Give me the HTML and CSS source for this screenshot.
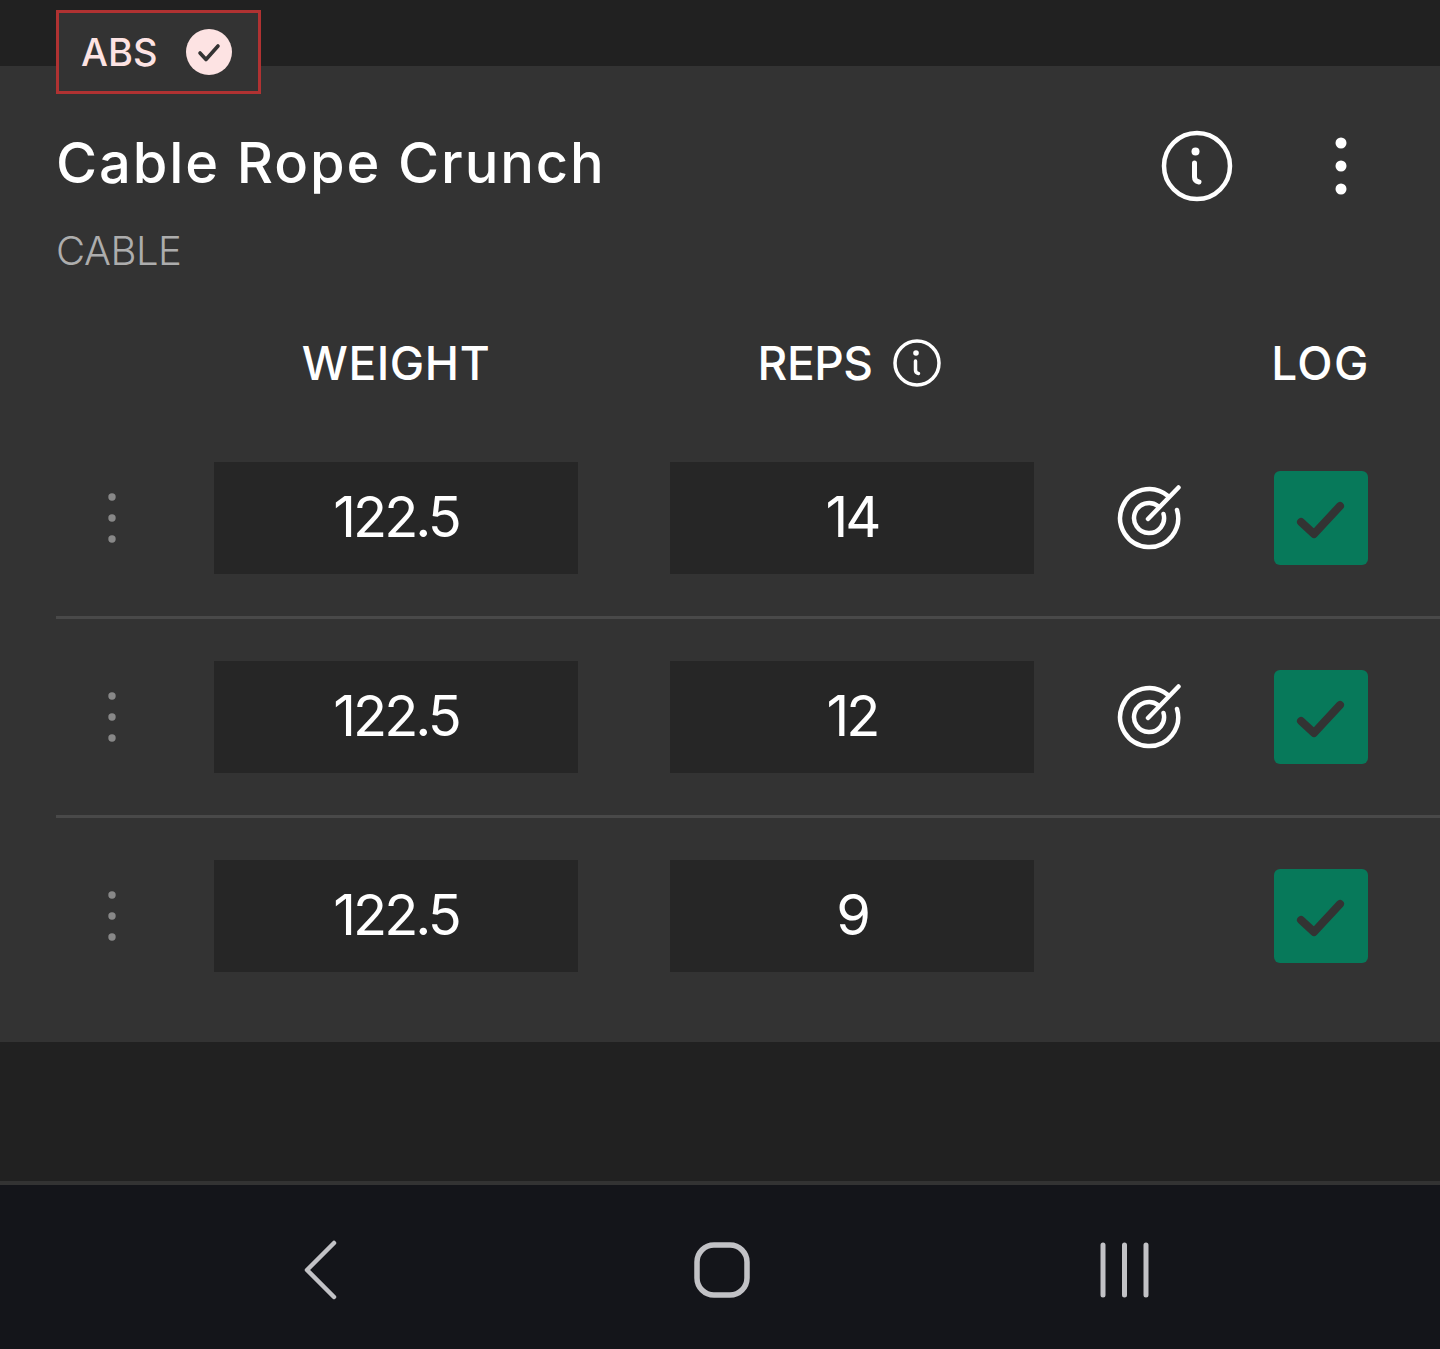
FILE: index.html
```html
<!DOCTYPE html>
<html lang="en">
<head>
  <meta charset="UTF-8">
  <title>Cable Rope Crunch</title>
  <meta name="viewport" content="width=device-width, initial-scale=1.0">
  <link rel="stylesheet" href="styles.css">
</head>
<body>
  <div class="top-bar">
    <div class="muscle-chip">
      <span>ABS</span>
      <svg class="chip-check" viewBox="0 0 46 46"><circle cx="23" cy="23" r="23" fill="#fde3e3"/><path d="M14 24l6 6.500 12-13.500" fill="none" stroke="#333" stroke-width="3.600" stroke-linecap="round" stroke-linejoin="round"/></svg>
    </div>
  </div>

  <section class="card">
    <div class="title-row">
      <h1>Cable Rope Crunch</h1>
      <svg class="info-big" viewBox="0 0 72 72"><circle cx="36" cy="36" r="33" fill="none" stroke="#fff" stroke-width="4.500"/><circle cx="34.500" cy="21.500" r="4" fill="#fff"/><path d="M33.500 33v14q0 4 4.500 5" fill="none" stroke="#fff" stroke-width="5" stroke-linecap="round"/></svg>
      <svg class="kebab" viewBox="0 0 12 58"><circle cx="6" cy="6" r="5.500" fill="#fff"/><circle cx="6" cy="29" r="5.500" fill="#fff"/><circle cx="6" cy="52" r="5.500" fill="#fff"/></svg>
    </div>
    <div class="equipment">CABLE</div>

    <div class="set-grid set-head">
      <div></div>
      <div class="col-title weight-title">WEIGHT</div>
      <div class="col-title reps-title">REPS
        <svg class="info-small" viewBox="0 0 48 48"><circle cx="24" cy="24" r="22" fill="none" stroke="#fff" stroke-width="3.500"/><circle cx="23" cy="14" r="2.800" fill="#fff"/><path d="M22.500 22v9q0 3 3 3.500" fill="none" stroke="#fff" stroke-width="3.500" stroke-linecap="round"/></svg>
      </div>
      <div></div>
      <div class="col-title log-title">LOG</div>
    </div>

    <div class="set-grid set-row">
      <svg class="handle" viewBox="0 0 8 50"><circle cx="4" cy="4" r="3.700"/><circle cx="4" cy="25" r="3.700"/><circle cx="4" cy="46" r="3.700"/></svg>
      <div class="value">122.5</div>
      <div class="value">14</div>
      <svg class="target" viewBox="0 0 68 68"><path d="M52 12A29 29 0 1 0 61 26M42 22A15 15 0 1 0 47.500 30M32 35L62.500 3.500" fill="none" stroke="#fff" stroke-width="4.500" stroke-linecap="round"/></svg>
      <div class="log-btn"><svg viewBox="0 0 94 94"><path d="M27 51L40 63 66 35" fill="none" stroke="#333" stroke-width="8" stroke-linecap="round" stroke-linejoin="round"/></svg></div>
    </div>

    <div class="set-grid set-row">
      <svg class="handle" viewBox="0 0 8 50"><circle cx="4" cy="4" r="3.700"/><circle cx="4" cy="25" r="3.700"/><circle cx="4" cy="46" r="3.700"/></svg>
      <div class="value">122.5</div>
      <div class="value">12</div>
      <svg class="target" viewBox="0 0 68 68"><path d="M52 12A29 29 0 1 0 61 26M42 22A15 15 0 1 0 47.500 30M32 35L62.500 3.500" fill="none" stroke="#fff" stroke-width="4.500" stroke-linecap="round"/></svg>
      <div class="log-btn"><svg viewBox="0 0 94 94"><path d="M27 51L40 63 66 35" fill="none" stroke="#333" stroke-width="8" stroke-linecap="round" stroke-linejoin="round"/></svg></div>
    </div>

    <div class="set-grid set-row last">
      <svg class="handle" viewBox="0 0 8 50"><circle cx="4" cy="4" r="3.700"/><circle cx="4" cy="25" r="3.700"/><circle cx="4" cy="46" r="3.700"/></svg>
      <div class="value">122.5</div>
      <div class="value">9</div>
      <div></div>
      <div class="log-btn"><svg viewBox="0 0 94 94"><path d="M27 51L40 63 66 35" fill="none" stroke="#333" stroke-width="8" stroke-linecap="round" stroke-linejoin="round"/></svg></div>
    </div>
  </section>

  <div class="spacer"></div>

  <nav class="nav-bar">
    <svg class="nav-back" viewBox="0 0 34 60"><path d="M31 3L4 30l0 0 27 27" fill="none" stroke="#c2c2c6" stroke-width="4.500" stroke-linecap="round" stroke-linejoin="round"/></svg>
    <svg class="nav-home" viewBox="0 0 60 60"><rect x="5" y="5" width="50" height="50" rx="17" fill="none" stroke="#c2c2c6" stroke-width="5.500"/></svg>
    <svg class="nav-recent" viewBox="0 0 56 56"><path d="M7 3v50M28.500 3v50M50 3v50" fill="none" stroke="#c2c2c6" stroke-width="5" stroke-linecap="round"/></svg>
  </nav>
</body>
</html>
```

FILE: styles.css
```css
* { box-sizing: border-box; }
body { margin: 0; font-family: Inter, "Noto Sans", sans-serif; background: #212121; color: #fff; }

.top-bar { height: 66px; padding: 10px 0 0 56px; }
.muscle-chip {
  display: flex; align-items: center; gap: 29px;
  width: 205px; height: 84px; padding-left: 22px;
  background: #333; border: 3px solid #b03232;
  position: relative; z-index: 1;
  font-size: 38px; font-weight: 500; color: #fde3e3;
}
.chip-check { width: 46px; height: 46px; }

.card { height: 976px; padding: 0 0 0 56px; background: #333; }

.title-row { display: flex; align-items: center; height: 200px; }
.title-row h1 { margin: -6px 0 0; flex: 1; font-size: 56px; font-weight: 500; letter-spacing: 1.900px; line-height: 60px; }
.info-big { width: 72px; height: 72px; margin-right: 102px; }
.kebab { width: 12px; height: 58px; margin-right: 93px; }

.equipment { margin-top: -40px; height: 50px; font-size: 40px; font-weight: 300; line-height: 50px; letter-spacing: -.5px; color: #adadad; }

.set-grid { display: grid; grid-template-columns: 158px 456px 364px 232px 102px; align-items: center; }
.set-head { height: 60px; margin-top: 57px; }
.col-title { font-size: 46px; font-weight: 500; text-align: center; line-height: 60px; }
.weight-title { width: 364px; letter-spacing: .6px; }
.reps-title { display: flex; justify-content: center; align-items: center; gap: 21px; padding-right: 5px; letter-spacing: -.5px; }
.info-small { width: 48px; height: 48px; }
.log-title { text-align: right; margin-right: -2px; letter-spacing: 1.500px; }

.set-row { height: 199px; border-bottom: 3px solid #494949; padding-bottom: 1px; }
.set-head + .set-row { margin-top: 27px; }
.set-row.last { border-bottom: 0; padding-bottom: 4px; }

.handle { width: 8px; height: 50px; fill: #888; margin-left: 52px; }
.value {
  width: 364px; height: 112px; background: #262626;
  font-size: 56px; letter-spacing: -3px; line-height: 110px; text-align: center;
}
.target { width: 68px; height: 68px; justify-self: center; }
.log-btn { width: 94px; height: 94px; justify-self: end; border-radius: 6px; background: #07795a; }
.log-btn svg { display: block; width: 94px; height: 94px; }

.spacer { height: 139px; }

.nav-bar {
  display: grid; grid-template-columns: repeat(3, 402px); justify-items: center; align-items: center;
  height: 168px; padding: 5px 0 0 119px;
  background: #14151a; border-top: 4px solid #333;
}
.nav-back { width: 34px; height: 60px; }
.nav-home { width: 60px; height: 60px; }
.nav-recent { width: 56px; height: 56px; }
```
